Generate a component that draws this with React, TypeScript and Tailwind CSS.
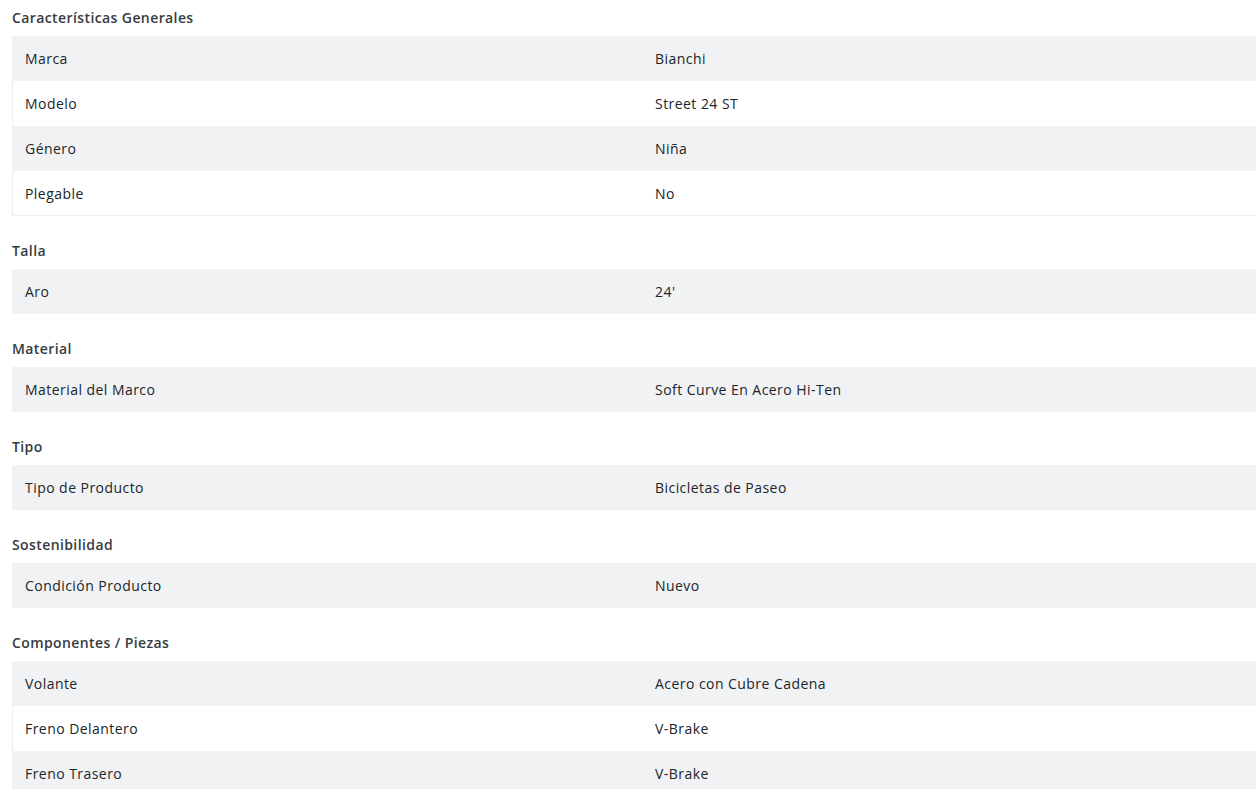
import React from "react";

type Section = { title: string; rows: [string, string][] };

const sections: Section[] = [
  {
    title: "Características Generales",
    rows: [
      ["Marca", "Bianchi"],
      ["Modelo", "Street 24 ST"],
      ["Género", "Niña"],
      ["Plegable", "No"],
    ],
  },
  { title: "Talla", rows: [["Aro", "24'"]] },
  { title: "Material", rows: [["Material del Marco", "Soft Curve En Acero Hi-Ten"]] },
  { title: "Tipo", rows: [["Tipo de Producto", "Bicicletas de Paseo"]] },
  { title: "Sostenibilidad", rows: [["Condición Producto", "Nuevo"]] },
  {
    title: "Componentes / Piezas",
    rows: [
      ["Volante", "Acero con Cubre Cadena"],
      ["Freno Delantero", "V-Brake"],
      ["Freno Trasero", "V-Brake"],
    ],
  },
];

export default function App() {
  return (
    <div
      className="w-[1256px] h-[789px] overflow-hidden bg-white pt-2 pl-3"
      style={{ fontFamily: '"Open Sans", "Liberation Sans", sans-serif' }}
    >
      <div className="flex flex-col gap-[25px] w-[1270px]">
        {sections.map((s) => (
          <div key={s.title}>
            <div className="h-5 leading-5 mb-2 text-[14px] tracking-[0.4px] font-semibold text-[#363b40]">
              {s.title}
            </div>
            <div className="ring-1 ring-inset ring-[#eeeff1]">
              {s.rows.map(([k, v], i) => (
                <div
                  key={k}
                  className={`flex h-[45px] items-center text-[14px] tracking-[0.45px] text-[#212529] ${
                    i % 2 === 0 ? "bg-[#f1f2f4]" : ""
                  }`}
                >
                  <div className="w-[643px] pl-[13px]">{k}</div>
                  <div>{v}</div>
                </div>
              ))}
            </div>
          </div>
        ))}
      </div>
    </div>
  );
}
